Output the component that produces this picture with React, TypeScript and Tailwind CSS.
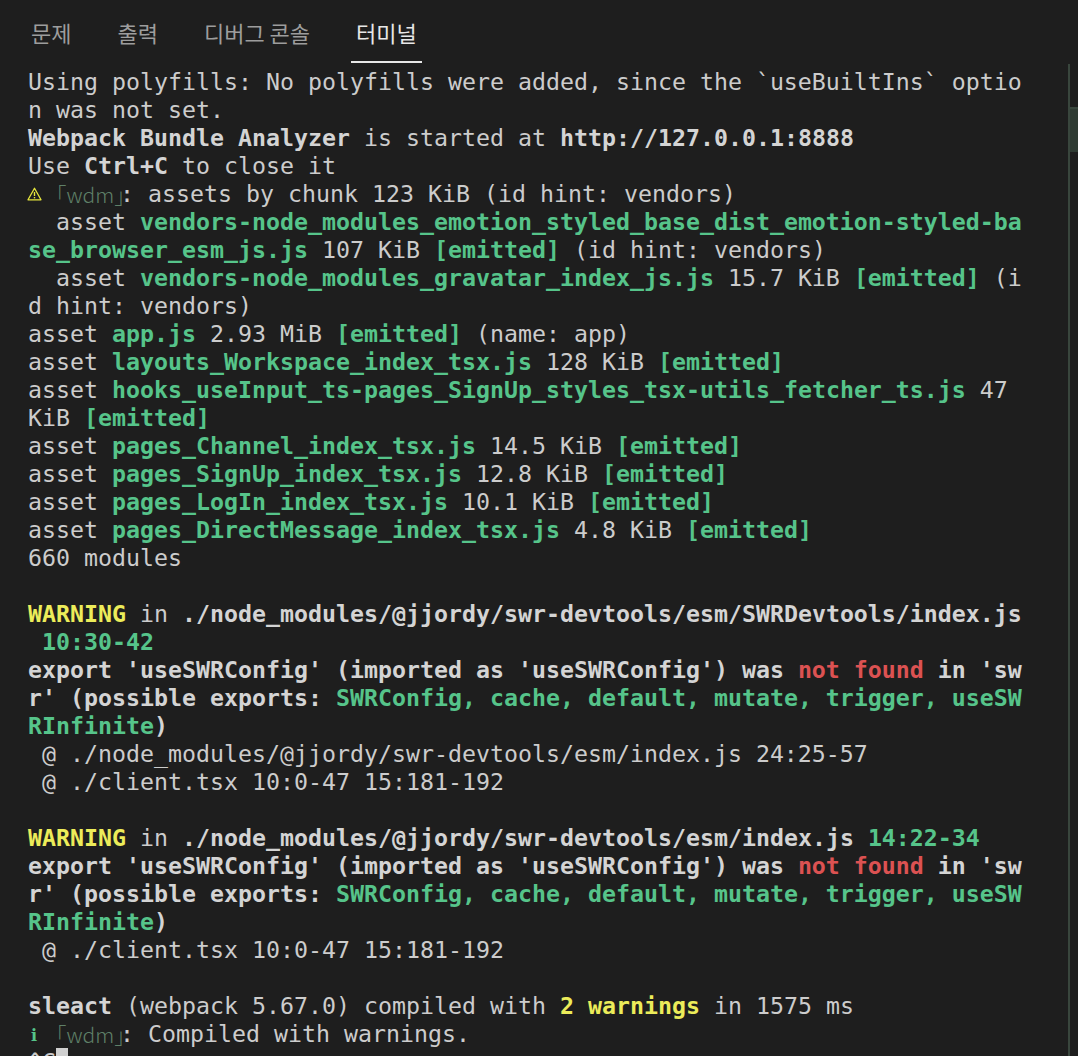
import React from 'react';

type Seg = [string, string?];

// n = normal, b = bold, g = green bold, y = yellow bold, r = red bold
const tone: Record<string, string> = {
  n: 'text-[#cccccc]',
  b: 'font-bold text-[#d4d4d4]',
  g: 'font-bold text-[#56c48a]',
  y: 'font-bold text-[#ecec5a]',
  r: 'font-bold text-[#dc5252]',
};

const TABS = ['문제', '출력', '디버그 콘솔', '터미널'];

const LINES: (Seg[] | { wdm: 'warn' | 'info'; rest: Seg[] } | null)[] = [
  [['Using polyfills: No polyfills were added, since the `useBuiltIns` optio']],
  [['n was not set.']],
  [['Webpack Bundle Analyzer', 'b'], [' is started at '], ['http://127.0.0.1:8888', 'b']],
  [['Use '], ['Ctrl+C', 'b'], [' to close it']],
  { wdm: 'warn', rest: [[': assets by chunk 123 KiB (id hint: vendors)']] },
  [['  asset '], ['vendors-node_modules_emotion_styled_base_dist_emotion-styled-ba', 'g']],
  [['se_browser_esm_js.js', 'g'], [' 107 KiB '], ['[emitted]', 'g'], [' (id hint: vendors)']],
  [['  asset '], ['vendors-node_modules_gravatar_index_js.js', 'g'], [' 15.7 KiB '], ['[emitted]', 'g'], [' (i']],
  [['d hint: vendors)']],
  [['asset '], ['app.js', 'g'], [' 2.93 MiB '], ['[emitted]', 'g'], [' (name: app)']],
  [['asset '], ['layouts_Workspace_index_tsx.js', 'g'], [' 128 KiB '], ['[emitted]', 'g']],
  [['asset '], ['hooks_useInput_ts-pages_SignUp_styles_tsx-utils_fetcher_ts.js', 'g'], [' 47']],
  [['KiB '], ['[emitted]', 'g']],
  [['asset '], ['pages_Channel_index_tsx.js', 'g'], [' 14.5 KiB '], ['[emitted]', 'g']],
  [['asset '], ['pages_SignUp_index_tsx.js', 'g'], [' 12.8 KiB '], ['[emitted]', 'g']],
  [['asset '], ['pages_LogIn_index_tsx.js', 'g'], [' 10.1 KiB '], ['[emitted]', 'g']],
  [['asset '], ['pages_DirectMessage_index_tsx.js', 'g'], [' 4.8 KiB '], ['[emitted]', 'g']],
  [['660 modules']],
  null,
  [['WARNING', 'y'], [' in '], ['./node_modules/@jjordy/swr-devtools/esm/SWRDevtools/index.js', 'b']],
  [[' '], ['10:30-42', 'g']],
  [["export 'useSWRConfig' (imported as 'useSWRConfig') was ", 'b'], ['not found', 'r'], [" in 'sw", 'b']],
  [["r' (possible exports: ", 'b'], ['SWRConfig, cache, default, mutate, trigger, useSW', 'g']],
  [['RInfinite', 'g'], [')', 'b']],
  [[' @ ./node_modules/@jjordy/swr-devtools/esm/index.js 24:25-57']],
  [[' @ ./client.tsx 10:0-47 15:181-192']],
  null,
  [['WARNING', 'y'], [' in '], ['./node_modules/@jjordy/swr-devtools/esm/index.js', 'b'], [' '], ['14:22-34', 'g']],
  [["export 'useSWRConfig' (imported as 'useSWRConfig') was ", 'b'], ['not found', 'r'], [" in 'sw", 'b']],
  [["r' (possible exports: ", 'b'], ['SWRConfig, cache, default, mutate, trigger, useSW', 'g']],
  [['RInfinite', 'g'], [')', 'b']],
  [[' @ ./client.tsx 10:0-47 15:181-192']],
  null,
  [['sleact', 'b'], [' (webpack 5.67.0) compiled with '], ['2 warnings', 'y'], [' in 1575 ms']],
  { wdm: 'info', rest: [[': Compiled with warnings.']] },
];

function Segs({ segs }: { segs: Seg[] }) {
  return (
    <>
      {segs.map(([text, t = 'n'], i) => (
        <span key={i} className={tone[t]}>
          {text}
        </span>
      ))}
    </>
  );
}

function WarnIcon() {
  return (
    <svg width="15" height="14" viewBox="0 0 15 14" fill="none" className="ml-[-1px]">
      <path d="M7.5 1.2 L14 12.8 H1 Z" stroke="#e6e63c" strokeWidth="1.3" strokeLinejoin="round" />
      <path d="M7.5 5 V9" stroke="#e6e63c" strokeWidth="1.4" />
      <rect x="6.8" y="10" width="1.4" height="1.4" fill="#e6e63c" />
    </svg>
  );
}

function WdmLine({ kind, rest }: { kind: 'warn' | 'info'; rest: Seg[] }) {
  return (
    <div className="h-[28px] whitespace-pre">
      <span className="inline-flex h-[28px] w-[28px] items-center align-top">
        {kind === 'warn' ? (
          <WarnIcon />
        ) : (
          <span className="font-['DejaVu_Serif',serif] text-[16px] font-bold leading-none text-[#56c48a] pl-[3px] pt-[4px]">
            i
          </span>
        )}
      </span>
      <span className="inline-block w-[64px] align-top font-['Noto_Sans_CJK_JP',sans-serif] text-[21px] font-light leading-[28px] text-[#5f8068]">
        ｢wdm｣
      </span>
      <Segs segs={rest} />
    </div>
  );
}

export default function App() {
  return (
    <div className="h-[1056px] w-full overflow-hidden bg-[#1e1e1e]">
      <div className="flex h-[64px] items-start gap-[36px] pl-[26px]">
        {TABS.map((tab) => {
          const active = tab === '터미널';
          return (
            <div
              key={tab}
              className={`flex h-[63px] items-center border-b-2 px-[5px] pt-[3px] font-['Noto_Sans_CJK_KR',sans-serif] text-[22px] leading-none ${
                active ? 'border-[#e7e7e7] text-[#e7e7e7]' : 'border-transparent text-[#9d9d9d]'
              }`}
            >
              {tab}
            </div>
          );
        })}
      </div>

      <div className="flex h-[992px]">
        <div className="min-w-0 flex-1 overflow-hidden pl-[28px] pt-[4px] font-['DejaVu_Sans_Mono',monospace] text-[23.25px] leading-[28px] text-[#cccccc]">
          {LINES.map((line, i) => {
            if (line === null) return <div key={i} className="h-[28px]" />;
            if (!Array.isArray(line)) return <WdmLine key={i} kind={line.wdm} rest={line.rest} />;
            return (
              <div key={i} className="h-[28px] whitespace-pre">
                <Segs segs={line} />
              </div>
            );
          })}
          <div className="h-[28px] whitespace-pre">
            <span className="text-[#cccccc]">^C</span>
            <span className="inline-block h-[28px] w-[12px] align-top bg-[#d0d0d0]" />
          </div>
        </div>
        <div className="w-[10px] shrink-0 border-l-2 border-[#39463d]">
          <div className="mt-[43px] h-[45px] border-t-2 border-[#39463d] bg-[#2f3b33]" />
        </div>
      </div>
    </div>
  );
}
